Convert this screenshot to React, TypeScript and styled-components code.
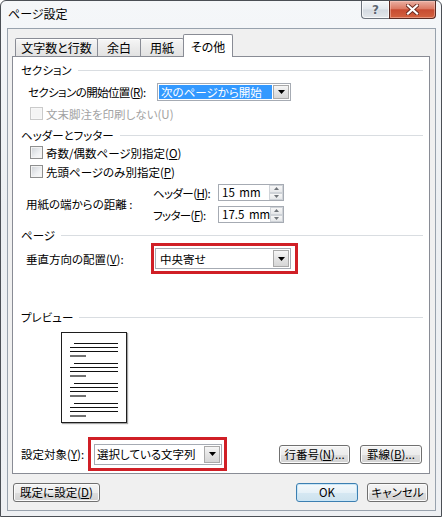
import React from "react";
import styled, { createGlobalStyle } from "styled-components";

const Global = createGlobalStyle`
  html, body { margin: 0; padding: 0; background: #ffffff; }
  body {
    font-family: "Noto Sans CJK JP", "Noto Sans", sans-serif;
    font-size: 11.5px;
    color: #000;
    font-feature-settings: "palt";
  }
  * { box-sizing: border-box; }
`;

const Window = styled.div`
  width: 442px;
  height: 517px;
  border: 1px solid #4b4f55;
  border-radius: 6px 6px 0 0;
  background: linear-gradient(#f5f7f9, #eceff2 40%, #eef0f3);
  padding: 0 5px 5px 6px;
  display: flex;
  flex-direction: column;
`;

const TitleBar = styled.div`
  height: 27px;
  display: flex;
  align-items: flex-start;
  padding-left: 1px;
`;

const Title = styled.div`
  line-height: 26px;
  font-size: 12px;
  color: #000;
`;

const Caption = styled.div`
  margin-left: auto;
  display: flex;
  height: 18px;
`;

const HelpBtn = styled.div`
  width: 28px;
  height: 18px;
  border: 1px solid #6c737c;
  border-top: none;
  border-right: none;
  border-radius: 0 0 0 4px;
  background: linear-gradient(#f6f8fa, #e3e8ed 48%, #d3d9e0 52%, #e4e8ec);
  box-shadow: inset 0 0 0 1px rgba(255, 255, 255, 0.7);
  display: flex;
  align-items: center;
  justify-content: center;
  font-family: "DejaVu Sans", sans-serif;
  font-weight: bold;
  font-size: 12px;
  color: #5d6671;
  text-shadow: 0 0 2px #fff;
  line-height: 1;
`;

const CloseBtn = styled.div`
  width: 47px;
  height: 18px;
  border: 1px solid #5a2a22;
  border-top: none;
  border-radius: 0 0 4px 0;
  background: linear-gradient(#eab0a3, #dc7a64 45%, #c74b31 52%, #d3623f);
  box-shadow: inset 0 0 0 1px rgba(255, 210, 200, 0.45);
  display: flex;
  align-items: center;
  justify-content: center;
`;

const Client = styled.div`
  flex: 1;
  border: 1px solid #98a2ad;
  background: #f0f0f0;
  padding: 5px 5px 0 4px;
  display: flex;
  flex-direction: column;
`;

const TabStrip = styled.div`
  display: flex;
  align-items: flex-end;
  height: 23px;
  padding-left: 3px;
  margin-bottom: -1px;
  position: relative;
  z-index: 1;
`;

const Tab = styled.div<{ $w: number; $active?: boolean; $first?: boolean }>`
  width: ${(p) => p.$w}px;
  margin-left: ${(p) => (p.$first ? 0 : -1)}px;
  height: ${(p) => (p.$active ? 23 : 18)}px;
  margin-bottom: ${(p) => (p.$active ? 0 : 1)}px;
  border: 1px solid #898c95;
  border-bottom: none;
  border-radius: 2px 2px 0 0;
  background: ${(p) =>
    p.$active ? "#ffffff" : "linear-gradient(#f6f6f6, #ebebeb 50%, #e2e2e2)"};
  box-shadow: ${(p) => (p.$active ? "none" : "inset 0 1px 0 #fff")};
  padding-top: ${(p) => (p.$active ? 3 : 0)}px;
  font-size: 12px;
  line-height: 17px;
  text-align: center;
  position: relative;
  z-index: ${(p) => (p.$active ? 2 : 1)};
  white-space: nowrap;
`;

const Panel = styled.div`
  width: 418px;
  height: 418px;
  background: #ffffff;
  border: 1px solid #898c95;
  display: flex;
  flex-direction: column;
`;

const GroupHeader = styled.div<{ $mt: number }>`
  margin-top: ${(p) => p.$mt}px;
  height: 16px;
  display: flex;
  align-items: center;
  gap: 6px;
  padding: 0 6px 0 8px;
  line-height: 16px;
  white-space: nowrap;
  &::after {
    content: "";
    flex: 1;
    height: 1px;
    background: #d9dde1;
  }
`;

const Row = styled.div<{ $mt: number; $h: number; $pl: number }>`
  margin-top: ${(p) => p.$mt}px;
  height: ${(p) => p.$h}px;
  padding-left: ${(p) => p.$pl}px;
  display: flex;
  align-items: center;
  white-space: nowrap;
`;

const Label = styled.span<{ $w?: number; $disabled?: boolean; $tight?: boolean }>`
  width: ${(p) => (p.$w ? `${p.$w}px` : "auto")};
  flex-shrink: 0;
  color: ${(p) => (p.$disabled ? "#a3a3a3" : "#000")};
  letter-spacing: ${(p) => (p.$tight ? "-0.6px" : "0")};
  line-height: 16px;
  white-space: nowrap;
`;

const CheckBox = styled.span<{ $disabled?: boolean }>`
  width: 13px;
  height: 13px;
  flex-shrink: 0;
  margin-right: 3px;
  border: 1px solid ${(p) => (p.$disabled ? "#cacaca" : "#8e8f8f")};
  background: ${(p) =>
    p.$disabled ? "#f4f4f4" : "linear-gradient(135deg, #cdd1d6, #eef0f2 60%, #fafafa)"};
  box-shadow: inset 0 0 0 1px ${(p) => (p.$disabled ? "#f7f7f7" : "#f3f3f3")};
`;

const Combo = styled.div<{ $w: number }>`
  width: ${(p) => p.$w}px;
  height: 100%;
  border: 1px solid #a6abb3;
  background: #fff;
  padding: 1px;
  display: flex;
  align-items: stretch;
  flex-shrink: 0;
`;

const ComboField = styled.div<{ $selected?: boolean; $pl: number }>`
  flex: 1;
  padding-left: ${(p) => p.$pl}px;
  display: flex;
  align-items: center;
  background: ${(p) => (p.$selected ? "#3399ff" : "transparent")};
  color: ${(p) => (p.$selected ? "#fff" : "#000")};
  margin-right: 1px;
  white-space: nowrap;
  overflow: hidden;
`;

const DropBtn = styled.div`
  width: 16px;
  border: 1px solid #a9a9a9;
  background: linear-gradient(#f6f6f6, #e4e4e4 50%, #d6d6d6);
  display: flex;
  align-items: center;
  justify-content: center;
`;

const RedBox = styled.div<{ $w: number; $pl: number }>`
  width: ${(p) => p.$w}px;
  height: 100%;
  border: 3px solid #d01f26;
  padding-left: ${(p) => p.$pl}px;
  display: flex;
  align-items: center;
  flex-shrink: 0;
`;

const ComboHolder = styled.div<{ $h: number }>`
  height: ${(p) => p.$h}px;
  display: flex;
`;

const Distance = styled.div`
  margin-top: 6px;
  height: 39px;
  padding-left: 13px;
  display: flex;
  align-items: center;
`;

const SpinCol = styled.div`
  display: flex;
  flex-direction: column;
  gap: 5px;
`;

const SpinRow = styled.div`
  height: 17px;
  display: flex;
  align-items: center;
`;

const SpinBox = styled.div`
  width: 66px;
  height: 17px;
  border: 1px solid #a6abb3;
  background: #fff;
  display: flex;
`;

const SpinValue = styled.div`
  flex: 1;
  padding-left: 3px;
  line-height: 15px;
  white-space: nowrap;
  word-spacing: 2px;
`;

const Spinner = styled.div`
  width: 14px;
  display: flex;
  flex-direction: column;
`;

const SpinBtn = styled.div`
  flex: 1;
  border: 1px solid #cfd3d8;
  background: linear-gradient(#f7f7f7, #e6e8ea);
  display: flex;
  align-items: center;
  justify-content: center;
`;

const PreviewPage = styled.div`
  margin-top: 7px;
  margin-left: 48px;
  width: 66px;
  height: 91px;
  border: 1px solid #1e1e1e;
  background: #fff;
  box-shadow: 1px 1px 1px rgba(0, 0, 0, 0.35);
  flex-shrink: 0;
`;

const Btn = styled.div<{ $w: number; $ml?: number; $default?: boolean }>`
  width: ${(p) => p.$w}px;
  height: 19px;
  margin-left: ${(p) => (p.$ml !== undefined ? `${p.$ml}px` : "0")};
  border: 1px solid ${(p) => (p.$default ? "#3c7fb1" : "#707070")};
  border-radius: 3px;
  background: ${(p) =>
    p.$default
      ? "linear-gradient(#f4f9fc, #e6f1f8 50%, #d6e8f3 51%, #cde2ee)"
      : "linear-gradient(#f4f4f4, #ececec 50%, #dedede 51%, #d2d2d2)"};
  box-shadow: inset 0 0 0 1px ${(p) => (p.$default ? "#c9e6f7" : "#fbfbfb")};
  display: flex;
  align-items: center;
  justify-content: center;
  line-height: 17px;
  white-space: nowrap;
  flex-shrink: 0;
`;

const BottomBar = styled.div`
  margin-top: 9px;
  padding-left: 1px;
  display: flex;
  align-items: center;
`;

const Tri = () => (
  <svg width="7" height="4" viewBox="0 0 7 4">
    <polygon points="0,0 7,0 3.5,4" fill="#000" />
  </svg>
);

const SmallTri = ({ up }: { up?: boolean }) => (
  <svg width="5" height="3" viewBox="0 0 5 3">
    <polygon points={up ? "0,3 5,3 2.5,0" : "0,0 5,0 2.5,3"} fill="#6f7479" />
  </svg>
);

const CloseGlyph = () => (
  <svg width="13" height="11" viewBox="0 0 13 11">
    <path d="M2 1.5 L11 9.5 M11 1.5 L2 9.5" stroke="#6b2a1f" strokeWidth="4" strokeLinecap="square" />
    <path d="M2 1.5 L11 9.5 M11 1.5 L2 9.5" stroke="#ffffff" strokeWidth="2.2" strokeLinecap="square" />
  </svg>
);

const PreviewLines = () => {
  const groups = [11, 31, 51, 71];
  return (
    <svg width="64" height="89" viewBox="0 0 64 89">
      {groups.map((b) => (
        <g key={b} stroke="#111" strokeWidth="1.2">
          <line x1="12" y1={b - 0.5} x2="56" y2={b - 0.5} />
          <line x1="8" y1={b + 3.5} x2="56" y2={b + 3.5} />
          <line x1="8" y1={b + 7.5} x2="56" y2={b + 7.5} />
          <line x1="8" y1={b + 12} x2="24" y2={b + 12} />
        </g>
      ))}
    </svg>
  );
};

export default function App() {
  return (
    <>
      <Global />
      <Window>
        <TitleBar>
          <Title>ページ設定</Title>
          <Caption>
            <HelpBtn>?</HelpBtn>
            <CloseBtn>
              <CloseGlyph />
            </CloseBtn>
          </Caption>
        </TitleBar>
        <Client>
          <TabStrip>
            <Tab $w={83} $first>文字数と行数</Tab>
            <Tab $w={44}>余白</Tab>
            <Tab $w={44}>用紙</Tab>
            <Tab $w={50} $active>その他</Tab>
          </TabStrip>
          <Panel>
            <GroupHeader $mt={5}>セクション</GroupHeader>
            <Row $mt={5} $h={18} $pl={15}>
              <Label $w={129} $tight>
                セクションの開始位置(<u>R</u>):
              </Label>
              <Combo $w={134}>
                <ComboField $selected $pl={2}>次のページから開始</ComboField>
                <DropBtn>
                  <Tri />
                </DropBtn>
              </Combo>
            </Row>
            <Row $mt={6} $h={13} $pl={17}>
              <CheckBox $disabled />
              <Label $disabled>文末脚注を印刷しない(U)</Label>
            </Row>

            <GroupHeader $mt={7}>ヘッダーとフッター</GroupHeader>
            <Row $mt={3} $h={13} $pl={17}>
              <CheckBox />
              <Label>
                奇数/偶数ページ別指定(<u>O</u>)
              </Label>
            </Row>
            <Row $mt={6} $h={13} $pl={17}>
              <CheckBox />
              <Label>
                先頭ページのみ別指定(<u>P</u>)
              </Label>
            </Row>
            <Distance>
              <Label $w={127}>用紙の端からの距離 :</Label>
              <SpinCol>
                <SpinRow>
                  <Label $w={65} $tight>
                    ヘッダー(<u>H</u>):
                  </Label>
                  <SpinBox>
                    <SpinValue>15 mm</SpinValue>
                    <Spinner>
                      <SpinBtn>
                        <SmallTri up />
                      </SpinBtn>
                      <SpinBtn>
                        <SmallTri />
                      </SpinBtn>
                    </Spinner>
                  </SpinBox>
                </SpinRow>
                <SpinRow>
                  <Label $w={65} $tight>
                    フッター(<u>F</u>):
                  </Label>
                  <SpinBox>
                    <SpinValue>17.5 mm</SpinValue>
                    <Spinner>
                      <SpinBtn>
                        <SmallTri up />
                      </SpinBtn>
                      <SpinBtn>
                        <SmallTri />
                      </SpinBtn>
                    </Spinner>
                  </SpinBox>
                </SpinRow>
              </SpinCol>
            </Distance>

            <GroupHeader $mt={4}>ページ</GroupHeader>
            <Row $mt={0} $h={31} $pl={13}>
              <Label $w={125}>
                垂直方向の配置(<u>V</u>):
              </Label>
              <RedBox $w={147} $pl={1}>
                <ComboHolder $h={21}>
                  <Combo $w={136}>
                    <ComboField $pl={3}>中央寄せ</ComboField>
                    <DropBtn>
                      <Tri />
                    </DropBtn>
                  </Combo>
                </ComboHolder>
              </RedBox>
            </Row>

            <GroupHeader $mt={35}>プレビュー</GroupHeader>
            <PreviewPage>
              <PreviewLines />
            </PreviewPage>

            <Row $mt={14} $h={34} $pl={8}>
              <Label $w={67}>
                設定対象(<u>Y</u>):
              </Label>
              <RedBox $w={139} $pl={3}>
                <ComboHolder $h={21}>
                  <Combo $w={128}>
                    <ComboField $pl={1}>選択している文字列</ComboField>
                    <DropBtn>
                      <Tri />
                    </DropBtn>
                  </Combo>
                </ComboHolder>
              </RedBox>
              <Btn $w={71} $ml={52}>
                行番号(<u>N</u>)...
              </Btn>
              <Btn $w={62} $ml={10}>
                罫線(<u>B</u>)...
              </Btn>
            </Row>
          </Panel>
          <BottomBar>
            <Btn $w={87}>
              既定に設定(<u>D</u>)
            </Btn>
            <Btn $w={62} $ml={196} $default>
              OK
            </Btn>
            <Btn $w={61} $ml={9}>
              キャンセル
            </Btn>
          </BottomBar>
        </Client>
      </Window>
    </>
  );
}
